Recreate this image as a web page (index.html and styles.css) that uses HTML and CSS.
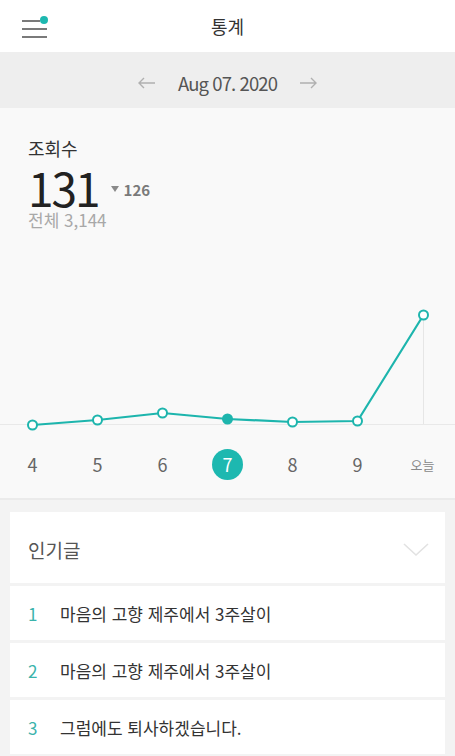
FILE: index.html
```html
<!DOCTYPE html>
<html lang="ko">
<head>
<meta charset="utf-8">
<title>통계</title>
<link rel="stylesheet" href="styles.css">
</head>
<body>
<header class="topbar">
  <div class="menu">
    <svg width="28" height="24" viewBox="0 0 28 24">
      <line x1="0" y1="6" x2="18" y2="6" stroke="#7a7a7a" stroke-width="2"/>
      <line x1="0" y1="14" x2="25" y2="14" stroke="#7a7a7a" stroke-width="2"/>
      <line x1="0" y1="22" x2="25" y2="22" stroke="#7a7a7a" stroke-width="2"/>
      <circle cx="22" cy="5" r="4" fill="#1db8b0"/>
    </svg>
  </div>
  <h1 class="title">통계</h1>
  <div></div>
</header>

<nav class="datebar">
  <svg class="arrow" width="18" height="12" viewBox="0 0 18 12"><path d="M17 6H1M6 1L1 6l5 5" fill="none" stroke="#b0b0b0" stroke-width="1.4"/></svg>
  <span class="date">Aug 07. 2020</span>
  <svg class="arrow" width="18" height="12" viewBox="0 0 18 12"><path d="M1 6h16M12 1l5 5-5 5" fill="none" stroke="#b0b0b0" stroke-width="1.4"/></svg>
</nav>

<section class="stats">
  <div class="label">조회수</div>
  <div class="count-row">
    <span class="count">131</span>
    <span class="delta">
      <svg width="8" height="6" viewBox="0 0 8 6"><path d="M0 0h8L4 6z" fill="#8a8a8a"/></svg>
      126
    </span>
  </div>
  <div class="total">전체 3,144</div>

  <svg class="chart" width="455" height="209" viewBox="0 0 455 209">
    <line x1="0" y1="193.5" x2="455" y2="193.5" stroke="#e9e9e9" stroke-width="1"/>
    <line x1="423.5" y1="84" x2="423.5" y2="193" stroke="#e6e6e6" stroke-width="1"/>
    <polyline points="32.5,194 97.5,189 162.5,182 227.5,188 292.5,191 357.5,190 423.5,84" fill="none" stroke="#1db5ad" stroke-width="2.2" stroke-linejoin="round"/>
    <g fill="#fff" stroke="#1db5ad" stroke-width="2">
      <circle cx="32.5" cy="194" r="4.5"/>
      <circle cx="97.5" cy="189" r="4.5"/>
      <circle cx="162.5" cy="182" r="4.5"/>
      <circle cx="292.5" cy="191" r="4.5"/>
      <circle cx="357.5" cy="190" r="4.5"/>
      <circle cx="423.5" cy="84" r="4.5"/>
    </g>
    <circle cx="227.5" cy="188" r="5.5" fill="#1db5ad"/>
  </svg>

  <div class="days">
    <span class="day">4</span>
    <span class="day">5</span>
    <span class="day">6</span>
    <span class="day"><span class="active">7</span></span>
    <span class="day">8</span>
    <span class="day">9</span>
    <span class="day today">오늘</span>
  </div>
</section>

<section class="popular">
  <div class="card-head">
    <span class="card-title">인기글</span>
    <svg width="26" height="14" viewBox="0 0 26 14"><path d="M1 1l12 11L25 1" fill="none" stroke="#e2e2e2" stroke-width="1.6"/></svg>
  </div>
  <div class="item"><span class="num">1</span><span class="text">마음의 고향 제주에서 3주살이</span></div>
  <div class="item"><span class="num">2</span><span class="text">마음의 고향 제주에서 3주살이</span></div>
  <div class="item"><span class="num">3</span><span class="text">그럼에도 퇴사하겠습니다.</span></div>
</section>
</body>
</html>
```

FILE: styles.css
```css
* { box-sizing: border-box; }
html, body { margin: 0; padding: 0; }
body {
  width: 455px;
  background: #f3f3f3;
  font-family: "Noto Sans CJK KR", "Noto Sans", sans-serif;
  color: #333;
}

.topbar {
  height: 52px;
  background: #fff;
  display: grid;
  grid-template-columns: 1fr auto 1fr;
  align-items: center;
}
.menu { padding-left: 22px; display: flex; align-items: center; height: 52px; padding-top: 2px; }
.menu svg { display: block; }
.title {
  margin: 0;
  font-size: 18px;
  font-weight: 400;
  color: #333;
  line-height: 52px;
}

.datebar {
  height: 56px;
  background: #eeeeee;
  display: flex;
  justify-content: center;
  align-items: center;
  gap: 22px;
  padding-top: 5px;
}
.date {
  font-size: 18.5px;
  color: #555;
  letter-spacing: -0.9px;
}
.arrow { display: block; }

.stats {
  background: #f9f9f9;
  padding-top: 27px;
  padding-bottom: 10px;
  border-bottom: 2px solid #ebebeb;
}
.label {
  padding-left: 28px;
  font-size: 18px;
  line-height: 26px;
  color: #333;
}
.count-row {
  margin-top: 4px;
  padding-left: 28px;
  display: flex;
  align-items: center;
  height: 44px;
}
.count {
  font-size: 46px;
  line-height: 44px;
  color: #222;
  letter-spacing: -2px;
}
.delta {
  margin-left: 12px;
  margin-top: 4px;
  display: flex;
  align-items: center;
  gap: 5px;
  font-size: 15px;
  font-weight: 700;
  color: #7a7a7a;
}
.total {
  margin-top: 0;
  padding-left: 28px;
  font-size: 17px;
  line-height: 22px;
  color: #a8a8a8;
}
.chart { display: block; }

.days {
  display: grid;
  grid-template-columns: repeat(7, 65px);
  height: 48px;
  align-items: center;
  justify-items: center;
}
.day {
  font-size: 18px;
  color: #666;
  display: flex;
  align-items: center;
  justify-content: center;
}
.active {
  width: 31px;
  height: 31px;
  border-radius: 50%;
  background: #1db8b0;
  color: #fff;
  display: flex;
  align-items: center;
  justify-content: center;
}
.today { font-size: 13px; color: #888; }

.popular {
  padding: 12px 10px 0;
  display: flex;
  flex-direction: column;
  gap: 3px;
}
.card-head {
  height: 71px;
  background: #fff;
  display: flex;
  align-items: center;
  justify-content: space-between;
  padding: 4px 16px 0 18px;
}
.card-title { font-size: 19px; color: #555; }
.item {
  height: 54px;
  background: #fff;
  display: flex;
  align-items: center;
  padding-left: 18px;
}
.num {
  width: 32px;
  font-size: 17px;
  color: #3ab3ab;
}
.text {
  font-size: 17px;
  color: #333;
}
```
